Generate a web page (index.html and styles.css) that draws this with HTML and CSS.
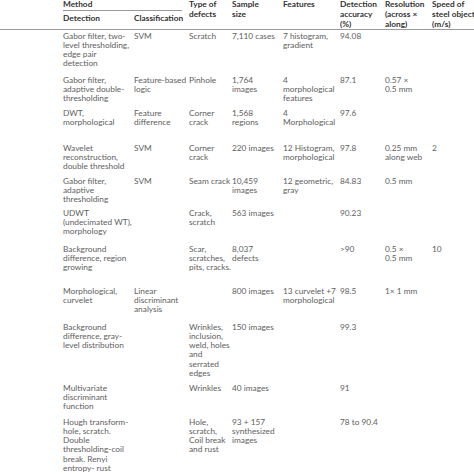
FILE: index.html
```html
<!DOCTYPE html>
<html>
<head>
<meta charset="utf-8">
<link rel="stylesheet" href="styles.css">
</head>
<body>
<table class="tbl">
  <colgroup>
    <col class="c0"><col class="c1"><col class="c2"><col class="c3"><col class="c4"><col class="c5"><col class="c6"><col class="c7"><col class="c8">
  </colgroup>
  <thead>
    <tr class="h1">
      <th rowspan="2" class="hb"></th>
      <th colspan="2" class="method"><div>Method</div></th>
      <th rowspan="2" class="hb">Type of<br>defects</th>
      <th rowspan="2" class="hb">Sample<br>size</th>
      <th rowspan="2" class="hb">Features</th>
      <th rowspan="2" class="hb">Detection<br>accuracy<br>(%)</th>
      <th rowspan="2" class="hb">Resolution<br>(across ×<br>along)</th>
      <th rowspan="2" class="hb">Speed of<br>steel object<br>(m/s)</th>
    </tr>
    <tr class="h2">
      <th class="hb sub">Detection</th>
      <th class="hb sub">Classification</th>
    </tr>
  </thead>
  <tbody>
    <tr class="r1"><td></td><td>Gabor filter, two-<br>level thresholding,<br>edge pair<br>detection</td><td>SVM</td><td>Scratch</td><td>7,110 cases</td><td>7 histogram,<br>gradient</td><td>94.08</td><td></td><td></td></tr>
    <tr class="r2"><td></td><td>Gabor filter,<br>adaptive double-<br>thresholding</td><td>Feature-based<br>logic</td><td>Pinhole</td><td>1,764<br>images</td><td>4<br>morphological<br>features</td><td>87.1</td><td>0.57 ×<br>0.5 mm</td><td></td></tr>
    <tr class="r3"><td></td><td>DWT,<br>morphological</td><td>Feature<br>difference</td><td>Corner<br>crack</td><td>1,568<br>regions</td><td>4<br>Morphological</td><td>97.6</td><td></td><td></td></tr>
    <tr class="r4"><td></td><td>Wavelet<br>reconstruction,<br>double threshold</td><td>SVM</td><td>Corner<br>crack</td><td>220 images</td><td>12 Histogram,<br>morphological</td><td>97.8</td><td>0.25 mm<br>along web</td><td>2</td></tr>
    <tr class="r5"><td></td><td>Gabor filter,<br>adaptive<br>thresholding</td><td>SVM</td><td>Seam crack</td><td>10,459<br>images</td><td>12 geometric,<br>gray</td><td>84.83</td><td>0.5 mm</td><td></td></tr>
    <tr class="r6"><td></td><td>UDWT<br>(undecimated WT),<br>morphology</td><td></td><td>Crack,<br>scratch</td><td>563 images</td><td></td><td>90.23</td><td></td><td></td></tr>
    <tr class="r7"><td></td><td>Background<br>difference, region<br>growing</td><td></td><td>Scar,<br>scratches,<br>pits, cracks.</td><td>8,037<br>defects</td><td></td><td>&gt;90</td><td>0.5 ×<br>0.5 mm</td><td>10</td></tr>
    <tr class="r8"><td></td><td>Morphological,<br>curvelet</td><td>Linear<br>discriminant<br>analysis</td><td></td><td>800 images</td><td>13 curvelet +7<br>morphological</td><td>98.5</td><td>1× 1 mm</td><td></td></tr>
    <tr class="r9"><td></td><td>Background<br>difference, gray-<br>level distribution</td><td></td><td>Wrinkles,<br>inclusion,<br>weld, holes<br>and<br>serrated<br>edges</td><td>150 images</td><td></td><td>99.3</td><td></td><td></td></tr>
    <tr class="r10"><td></td><td>Multivariate<br>discriminant<br>function</td><td></td><td>Wrinkles</td><td>40 images</td><td></td><td>91</td><td></td><td></td></tr>
    <tr class="r11"><td></td><td>Hough transform-<br>hole, scratch.<br>Double<br>thresholding-coil<br>break. Renyi<br>entropy- rust</td><td></td><td>Hole,<br>scratch,<br>Coil break<br>and rust</td><td>93 + 157<br>synthesized<br>images</td><td></td><td>78 to 90.4</td><td></td><td></td></tr>
  </tbody>
</table>
</body>
</html>
```

FILE: styles.css
```css
html, body {
  margin: 0;
  padding: 0;
  background: #ffffff;
}
body {
  width: 474px;
  height: 474px;
  overflow: hidden;
}
.tbl {
  table-layout: fixed;
  width: 490px;
  border-collapse: separate;
  border-spacing: 0;
  margin-top: -1px;
  font-family: "Lato", "Open Sans", sans-serif;
  font-size: 8.3px;
  color: #5e5e5e;
  white-space: nowrap;
}
.c0 { width: 61px; }
.c1 { width: 71px; }
.c2 { width: 55px; }
.c3 { width: 43px; }
.c4 { width: 51px; }
.c5 { width: 57px; }
.c6 { width: 45px; }
.c7 { width: 47px; }
.c8 { width: 60px; }
th {
  text-align: left;
  vertical-align: top;
  font-weight: 700;
  font-size: 8.3px;
  color: #333333;
  line-height: 10px;
  padding: 0 2px;
}
.hb {
  border-bottom: 1px solid #9a9a9a;
}
.h1 { height: 12px; }
.h2 { height: 19px; }
.method div {
  line-height: 10px;
  padding-bottom: 1px;
  margin-right: 3px;
  border-bottom: 1px solid #9a9a9a;
}
.sub {
  padding-top: 2px;
}
td {
  vertical-align: top;
  padding: 1.5px 2px 0 2px;
  line-height: 9.3px;
}
.r1 { height: 44px; }
.r2 { height: 33.5px; }
.r3 { height: 34.5px; }
.r4 { height: 33px; }
.r5 { height: 32px; }
.r6 { height: 36px; }
.r7 { height: 42px; }
.r8 { height: 36px; }
.r9 { height: 61px; }
.r10 { height: 34px; }
.r11 { height: 60px; }
```
